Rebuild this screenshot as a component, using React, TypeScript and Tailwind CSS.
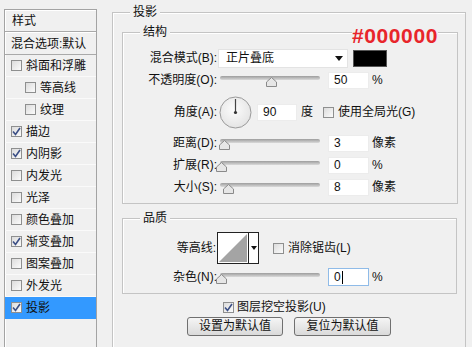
import React from "react";

type Row = { label: string; checked?: boolean; indent?: boolean; active?: boolean };

const rows: Row[] = [
  { label: "斜面和浮雕" },
  { label: "等高线", indent: true },
  { label: "纹理", indent: true },
  { label: "描边", checked: true },
  { label: "内阴影", checked: true },
  { label: "内发光" },
  { label: "光泽" },
  { label: "颜色叠加" },
  { label: "渐变叠加", checked: true },
  { label: "图案叠加" },
  { label: "外发光" },
  { label: "投影", checked: true, active: true },
];

const CheckBox = ({ checked }: { checked?: boolean }) => (
  <div className="w-[11px] h-[11px] shrink-0 border border-[#8e8f8f] bg-gradient-to-br from-[#dcdcdc] to-[#fbfbfb] flex items-center justify-center">
    {checked && (
      <svg width="9" height="9" viewBox="0 0 9 9">
        <path d="M1 4.5 L3.5 7.5 L8 1" fill="none" stroke="#3b4f86" strokeWidth="1.6" />
      </svg>
    )}
  </div>
);

const Slider = ({ pos }: { pos: number }) => (
  <div className="relative w-[100px] h-[20px] shrink-0">
    <div className="absolute left-0 top-[6px] w-[100px] h-[4px] rounded-full bg-gradient-to-b from-[#9d9d9d] to-[#dadada]" />
    <svg className="absolute top-[7px]" style={{ left: pos - 5 }} width="11" height="10" viewBox="0 0 11 10">
      <path d="M5.5 0.5 L10.5 5 L10.5 9.5 L0.5 9.5 L0.5 5 Z" fill="#e6e6e6" stroke="#8a8a8a" />
    </svg>
  </div>
);

const Field = ({ value, w = 41, focus }: { value: string; w?: number; focus?: boolean }) => (
  <div
    className={
      focus
        ? "h-[18px] bg-white border border-[#8fbbe8] pl-[5px] text-[12px] leading-[16px] flex items-center"
        : "h-[17px] bg-white border border-[#ececec] pl-[5px] text-[12px] leading-[15px] flex items-center"
    }
    style={{ width: w }}
  >
    {value}
    {focus && <span className="w-px h-[13px] bg-black ml-px" />}
  </div>
);

const Legend = ({ text }: { text: string }) => (
  <div className="-mt-[9px] ml-[17px] w-fit px-[3px] bg-[#f0f0f0] text-[12px] leading-[16px]">{text}</div>
);

const SliderRow = ({ label, pos, value, unit, mt }: { label: string; pos: number; value: string; unit: string; mt: string }) => (
  <div className={`flex items-center h-[20px] ${mt}`}>
    <div className="w-[94px] text-right">{label}</div>
    <div className="ml-[3px]">
      <Slider pos={pos} />
    </div>
    <div className="ml-[8px]">
      <Field value={value} />
    </div>
    <div className="ml-[3px]">{unit}</div>
  </div>
);

export default function App() {
  return (
    <div className="relative w-[472px] h-[347px] overflow-hidden bg-[#f0f0f0] flex items-start text-[12px] text-[#111] font-['Liberation_Sans','Noto_Sans_CJK_SC',sans-serif]">
      {/* left list */}
      <div className="ml-[4px] mt-[9px] w-[93px] h-[360px] border border-[#a3a3a3] bg-[#f0f0f0] shadow-[inset_1px_1px_0_#ffffff]">
        <div className="h-[22px] pl-[7px] flex items-center border-b border-[#a9a9a9]">样式</div>
        <div className="h-[23px] pl-[6px] flex items-center border-t border-white border-b border-b-[#a9a9a9]">混合选项:默认</div>
        {rows.map((r) => (
          <div
            key={r.label}
            className={
              "h-[22px] flex items-center gap-[4px] border-b " +
              (r.active ? "bg-[#3399ff] border-[#3399ff]" : "border-[#fafafa]") +
              (r.indent ? " pl-[20px]" : " pl-[6px]")
            }
          >
            <CheckBox checked={r.checked} />
            <span>{r.label}</span>
          </div>
        ))}
      </div>

      {/* right panel */}
      <div className="ml-[15px] mt-[12px] w-[354px] h-[360px] border border-[#c4c4c4] shadow-[inset_1px_1px_0_#ffffff] flex flex-col">
        <Legend text="投影" />

        {/* 结构 */}
        <div className="mt-[12px] ml-[9px] w-[336px] border border-[#c4c4c4] shadow-[inset_1px_1px_0_#ffffff] pb-[6px] flex flex-col">
          <Legend text="结构" />
          <div className="flex items-center h-[20px] mt-[8px]">
            <div className="w-[94px] text-right">混合模式(B):</div>
            <div className="ml-[1px] w-[130px] h-[19px] bg-white border border-[#e3e3e3] flex items-center justify-between pl-[7px] pr-[4px]">
              <span>正片叠底</span>
              <svg width="8" height="5" viewBox="0 0 8 5">
                <path d="M0 0 H8 L4 5 Z" fill="#111" />
              </svg>
            </div>
            <div className="ml-[5px] w-[34px] h-[17px] bg-black border border-[#555]" />
          </div>
          <SliderRow label="不透明度(O):" pos={51} value="50" unit="%" mt="mt-[2px]" />
          <div className="flex items-center h-[32px] mt-[6px]">
            <div className="w-[94px] text-right">角度(A):</div>
            <svg className="ml-[2px] shrink-0" width="33" height="33" viewBox="0 0 33 33">
              <defs>
                <radialGradient id="dial" cx="0.45" cy="0.4" r="0.6">
                  <stop offset="0" stopColor="#fcfcfc" />
                  <stop offset="1" stopColor="#e4e4e4" />
                </radialGradient>
              </defs>
              <circle cx="16.5" cy="16.5" r="15.5" fill="url(#dial)" stroke="#9a9a9a" />
              <line x1="16.5" y1="16.5" x2="16.5" y2="3" stroke="#444" strokeWidth="1.2" />
              <circle cx="16.5" cy="16.5" r="1.6" fill="#333" />
            </svg>
            <div className="ml-[5px]">
              <Field value="90" w={40} />
            </div>
            <div className="ml-[4px]">度</div>
            <div className="ml-[10px] flex items-center gap-[4px]">
              <CheckBox />
              <span>使用全局光(G)</span>
            </div>
          </div>
          <SliderRow label="距离(D):" pos={4} value="3" unit="像素" mt="mt-[5px]" />
          <SliderRow label="扩展(R):" pos={1} value="0" unit="%" mt="mt-[2px]" />
          <SliderRow label="大小(S):" pos={8} value="8" unit="像素" mt="mt-[2px]" />
        </div>

        {/* 品质 */}
        <div className="mt-[14px] ml-[9px] w-[335px] border border-[#c4c4c4] shadow-[inset_1px_1px_0_#ffffff] pb-[6px] flex flex-col">
          <Legend text="品质" />
          <div className="flex items-center h-[32px] mt-[6px]">
            <div className="w-[93px] text-right">等高线:</div>
            <div className="ml-[1px] w-[42px] h-[32px] border border-[#222] bg-white flex">
              <svg width="30" height="30" viewBox="0 0 30 30">
                <path d="M1 29 L29 1 L29 29 Z" fill="#a4a4a4" />
              </svg>
              <div className="flex-1 border-l border-[#222] flex items-center justify-center">
                <svg width="6" height="4" viewBox="0 0 6 4">
                  <path d="M0 0 H6 L3 4 Z" fill="#111" />
                </svg>
              </div>
            </div>
            <div className="ml-[14px] flex items-center gap-[4px]">
              <CheckBox />
              <span>消除锯齿(L)</span>
            </div>
          </div>
          <div className="flex items-center h-[20px] mt-[3px]">
            <div className="w-[94px] text-right">杂色(N):</div>
            <div className="ml-[3px]">
              <Slider pos={1} />
            </div>
            <div className="ml-[8px]">
              <Field value="0" focus />
            </div>
            <div className="ml-[3px]">%</div>
          </div>
        </div>

        <div className="mt-[5px] ml-[110px] h-[16px] flex items-center gap-[3px]">
          <CheckBox checked />
          <span>图层挖空投影(U)</span>
        </div>
        <div className="mt-[2px] ml-[74px] flex gap-[11px]">
          <button className="w-[96px] h-[19px] rounded-[3px] border border-[#707070] bg-gradient-to-b from-[#f5f5f5] to-[#dadada] text-[12px] leading-[17px]">
            设置为默认值
          </button>
          <button className="w-[97px] h-[19px] rounded-[3px] border border-[#707070] bg-gradient-to-b from-[#f5f5f5] to-[#dadada] text-[12px] leading-[17px]">
            复位为默认值
          </button>
        </div>
      </div>

      {/* annotation */}
      <div className="absolute left-[352px] top-[26px] bg-[#f0f0f0] text-[21px] leading-[20px] font-bold tracking-[0.6px] text-[#e8252b] font-['Liberation_Sans',sans-serif]">
        #000000
      </div>
    </div>
  );
}
